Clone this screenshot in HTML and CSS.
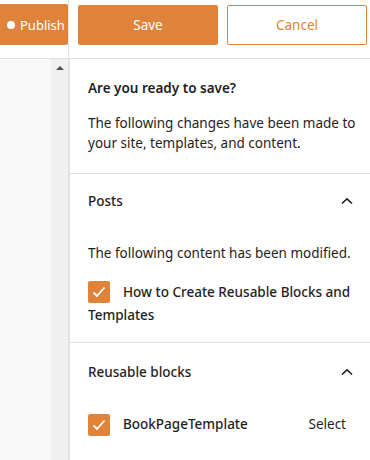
FILE: index.html
```html
<!DOCTYPE html>
<html lang="en">
<head>
    <meta charset="UTF-8">
    <meta name="viewport" content="width=device-width, initial-scale=1.0">
    <title>Save changes</title>
    <link rel="stylesheet" href="styles.css">
</head>
<body>
    <div class="header">
        <div class="header-left">
            <button class="btn btn-publish"><span class="dot"></span>Publish</button>
        </div>
        <div class="header-right">
            <button class="btn btn-save">Save</button>
            <button class="btn btn-cancel">Cancel</button>
        </div>
    </div>
    <div class="main">
        <div class="editor">
            <div class="editor-body"></div>
            <div class="scrollbar"><span class="arrow-up"></span></div>
        </div>
        <div class="panel">
            <div class="section intro">
                <div class="title">Are you ready to save?</div>
                <p class="text">The following changes have been made to your site, templates, and content.</p>
            </div>
            <div class="section posts">
                <div class="section-head">
                    <span class="title">Posts</span>
                    <svg class="chevron" width="12" height="8" viewBox="0 0 12 8"><polyline points="1,6.5 6,1.8 11,6.5" fill="none" stroke="#1e1e1e" stroke-width="1.6"/></svg>
                </div>
                <p class="text modified">The following content has been modified.</p>
                <label class="check-row wrap">
                    <span class="checkbox"><svg width="14" height="12" viewBox="0 0 14 12"><polyline points="1.5,6.5 5,10 12.5,1.5" fill="none" stroke="#fff" stroke-width="1.8"/></svg></span>How to Create Reusable Blocks and Templates
                </label>
            </div>
            <div class="section blocks">
                <div class="section-head">
                    <span class="title">Reusable blocks</span>
                    <svg class="chevron" width="12" height="8" viewBox="0 0 12 8"><polyline points="1,6.5 6,1.8 11,6.5" fill="none" stroke="#1e1e1e" stroke-width="1.6"/></svg>
                </div>
                <div class="check-row line">
                    <span class="checkbox"><svg width="14" height="12" viewBox="0 0 14 12"><polyline points="1.5,6.5 5,10 12.5,1.5" fill="none" stroke="#fff" stroke-width="1.8"/></svg></span>
                    <span class="name">BookPageTemplate</span>
                    <span class="select">Select</span>
                </div>
            </div>
        </div>
    </div>
</body>
</html>
```

FILE: styles.css
```css
body {
    margin: 0;
    font-family: "Noto Sans", "Open Sans", sans-serif;
    font-size: 13.5px;
    color: #1e1e1e;
    background: #fff;
    width: 370px;
    height: 460px;
    overflow: hidden;
}
.header {
    display: flex;
    height: 58px;
    border-bottom: 1px solid #e0e0e0;
}
.header-left {
    width: 69px;
    border-right: 1px solid #e0e0e0;
    padding-top: 4px;
}
.header-right {
    flex: 1;
    display: flex;
    gap: 9px;
    padding: 5px 3px 0 9px;
}
.btn {
    font-family: inherit;
    font-size: 13.5px;
    height: 40px;
    border-radius: 2px;
    cursor: pointer;
}
.btn-publish {
    width: 68px;
    height: 41px;
    font-size: 13px;
    background: #df833b;
    color: #fff;
    border: none;
    border-radius: 0 2px 2px 0;
    padding: 0 0 0 7px;
    display: flex;
    align-items: center;
    gap: 5px;
    white-space: nowrap;
}
.dot {
    width: 8px;
    height: 8px;
    border-radius: 50%;
    background: #fff;
    flex-shrink: 0;
}
.btn-save {
    width: 140px;
    background: #df833b;
    color: #fff;
    border: none;
}
.btn-cancel {
    width: 140px;
    background: #fff;
    color: #df833b;
    border: 1.5px solid #df833b;
}
.main {
    display: flex;
    height: 401px;
}
.editor {
    width: 70px;
    display: flex;
    background: #f9f9f9;
}
.editor-body {
    flex: 1;
}
.scrollbar {
    width: 17px;
    background: #f0f0f0;
    border-right: 2px solid #e3e3e3;
    position: relative;
}
.arrow-up {
    position: absolute;
    top: 7px;
    left: 5px;
    border-left: 4px solid transparent;
    border-right: 4px solid transparent;
    border-bottom: 4px solid #505050;
}
.panel {
    flex: 1;
}
.section {
    border-bottom: 1px solid #e0e0e0;
    padding: 0 18px;
}
.title {
    font-weight: 600;
    line-height: 20px;
}
.section-head .title {
    font-weight: 500;
}
.text {
    margin: 0;
    line-height: 20px;
}
.intro {
    padding-top: 19px;
    padding-right: 10px;
    padding-bottom: 20px;
}
.intro .text {
    margin-top: 15px;
}
.section-head {
    display: flex;
    justify-content: space-between;
    align-items: center;
    height: 20px;
}
.chevron {
    margin-right: -1px;
}
.posts {
    padding-top: 17px;
    padding-bottom: 15px;
}
.modified {
    margin-top: 32px;
}
.check-row {
    display: block;
    margin-top: 18px;
    line-height: 23px;
    font-weight: 500;
}
.checkbox {
    display: inline-flex;
    align-items: center;
    justify-content: center;
    width: 22px;
    height: 22px;
    background: #df833b;
    border-radius: 2px;
    vertical-align: top;
    margin-right: 13px;
}
.blocks {
    padding-top: 19px;
    border-bottom: none;
}
.check-row.line {
    display: flex;
    align-items: center;
    margin-top: 31px;
}
.check-row.line .checkbox {
    margin-right: 13px;
}
.name {
    flex: 1;
}
.select {
    font-weight: 400;
    margin-right: 6px;
}
```
